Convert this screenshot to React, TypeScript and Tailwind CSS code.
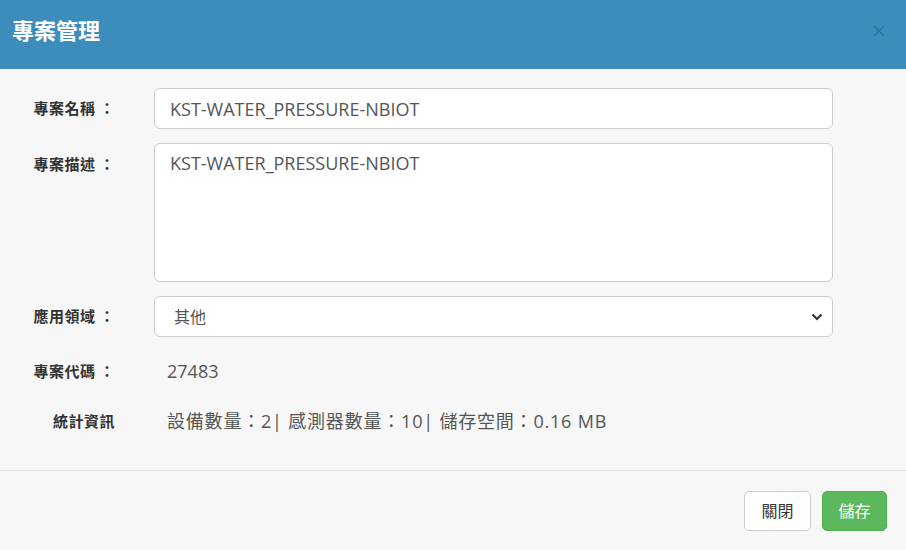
const latin = "font-['Open_Sans','Noto_Sans_CJK_TC',sans-serif]";

function Label({ children, colon = true }: { children: string; colon?: boolean }) {
  return (
    <div className="w-[115px] shrink-0 text-right text-[15px] font-bold text-[#333] tracking-[0.5px]">
      {children}
      {colon && <span className="ml-[4px]">：</span>}
    </div>
  );
}

export default function App() {
  return (
    <div className={`w-[906px] h-[550px] bg-[#f7f7f7] ${latin} flex flex-col`}>
      <div className="h-[69px] bg-[#3c8dbc] flex items-center justify-between pl-[12px] pr-[21px] pb-[8px]">
        <h4 className="text-[22px] font-bold text-white">專案管理</h4>
        <button>
          <svg width="12" height="12" viewBox="0 0 12 12">
            <path d="M1 1L11 11M11 1L1 11" stroke="#30719a" strokeWidth="1.4" />
          </svg>
        </button>
      </div>

      <div className="flex-1 pt-[19px] flex flex-col">
        <div className="flex items-center">
          <Label>專案名稱</Label>
          <input
            className="ml-[39px] w-[679px] h-[41px] rounded-[6px] border border-[#ccc] bg-white px-[15px] text-[18px] text-[#555] outline-none"
            defaultValue="KST-WATER_PRESSURE-NBIOT"
          />
        </div>
        <div className="flex items-start mt-[14px]">
          <div className="pt-[10px]">
            <Label>專案描述</Label>
          </div>
          <textarea
            className="ml-[39px] w-[679px] h-[139px] rounded-[6px] border border-[#ccc] bg-white px-[15px] py-[6px] text-[18px] text-[#555] outline-none resize-none"
            defaultValue="KST-WATER_PRESSURE-NBIOT"
          />
        </div>
        <div className="flex items-center mt-[14px]">
          <Label>應用領域</Label>
          <div className="relative ml-[39px] w-[679px] h-[41px] rounded-[6px] border border-[#ccc] bg-white flex items-center pl-[19px] text-[16px] text-[#555]">
            其他
            <svg width="12" height="8" viewBox="0 0 12 8" className="absolute right-[9px] top-[16px]">
              <path d="M1.5 1.5L6 6L10.5 1.5" fill="none" stroke="#333" strokeWidth="2.2" />
            </svg>
          </div>
        </div>
        <div className="flex items-center mt-[20px] h-[28px]">
          <Label>專案代碼</Label>
          <div className="ml-[52px] text-[18px] text-[#555]">27483</div>
        </div>
        <div className="flex items-center mt-[22px] h-[28px]">
          <Label colon={false}>統計資訊</Label>
          <div className="ml-[52px] text-[18px] text-[#555] tracking-[0.8px]">
            設備數量：2| 感測器數量：10| 儲存空間：0.16 MB
          </div>
        </div>
      </div>

      <div className="h-[80px] border-t border-[#e5e5e5] flex items-center justify-end gap-[11px] pr-[19px]">
        <button className="h-[40px] w-[67px] rounded-[5px] border border-[#ccc] bg-white text-[16px] text-[#333]">
          關閉
        </button>
        <button className="h-[40px] w-[65px] rounded-[5px] border border-[#4cae4c] bg-[#5cb85c] text-[16px] text-white">
          儲存
        </button>
      </div>
    </div>
  );
}
